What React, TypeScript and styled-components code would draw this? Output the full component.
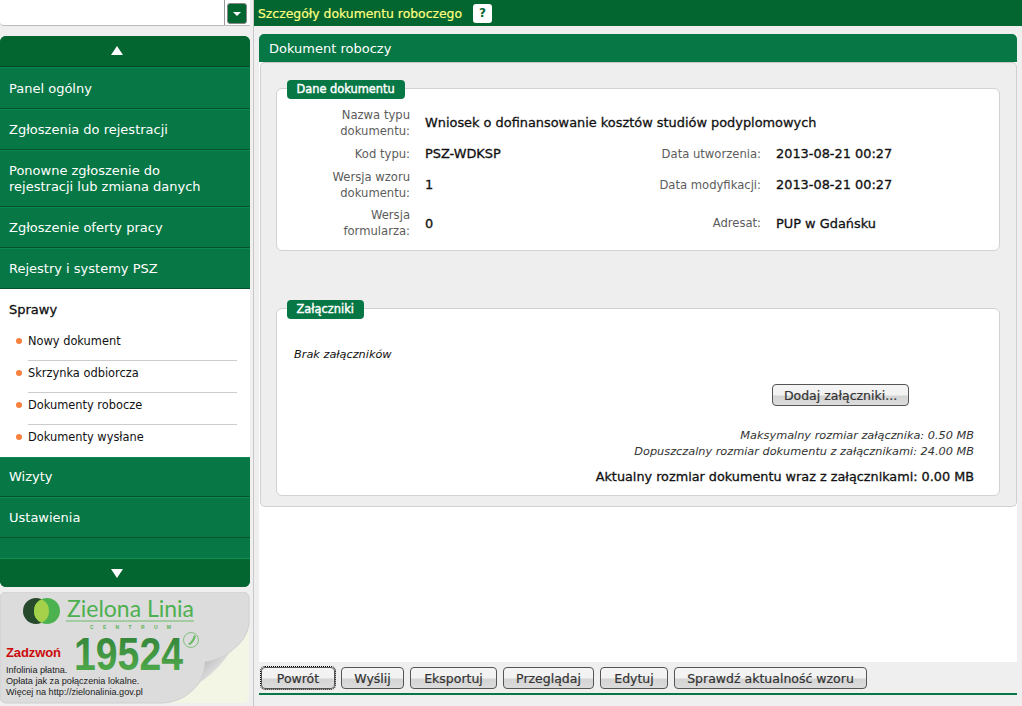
import React from "react";
import styled, { createGlobalStyle } from "styled-components";

const GREEN = "#077745";
const DARK = "#03652f";

const GlobalStyle = createGlobalStyle`
  html, body, #root {
    margin: 0;
    height: 100%;
  }
  body {
    background: #efefef;
    overflow: hidden;
    font-family: "DejaVu Sans", Verdana, sans-serif;
    font-size: 11.4px;
    color: #111;
  }
`;

const Page = styled.div`
  display: flex;
  height: 706px;
`;

const Side = styled.aside`
  width: 250px;
  flex: none;
  display: flex;
  flex-direction: column;
`;

const SelectRow = styled.div`
  height: 25px;
  display: flex;
  background: #fff;
  border-bottom: 1px solid #bbb;
  border-radius: 0 0 0 4px;
`;

const SelectBox = styled.div`
  width: 225px;
  flex: none;
  box-sizing: border-box;
  border-right: 1px solid #999;
`;

const SelectButton = styled.div`
  box-sizing: border-box;
  width: 20px;
  height: 21px;
  margin: 3px 0 0 2px;
  background: ${DARK};
  border: 1px solid #888;
  border-radius: 3px;
  display: flex;
  align-items: center;
  justify-content: center;
  &::after {
    content: "";
    border: 4px solid transparent;
    border-top: 4px solid #fff;
    border-bottom: 0;
  }
`;

const Menu = styled.nav`
  margin-top: 10px;
  height: 551px;
  display: flex;
  flex-direction: column;
  background: ${GREEN};
  border-radius: 6px;
  overflow: hidden;
`;

const Scroller = styled.div<{ $down?: boolean; $h: number }>`
  box-sizing: border-box;
  height: ${p => p.$h}px;
  flex: none;
  padding: ${p => (p.$down ? "0 16px 0 0" : "0 16px 1px 0")};
  background: ${DARK};
  display: flex;
  align-items: center;
  justify-content: center;
  border-bottom: ${p => (p.$down ? "0" : "1px solid #024a24")};
  border-top: ${p => (p.$down ? "1px solid #109052" : "0")};
  &::after {
    content: "";
    border-left: 6px solid transparent;
    border-right: 6px solid transparent;
    ${p =>
      p.$down
        ? "border-top: 9px solid #fff;"
        : "border-bottom: 9px solid #fff;"}
  }
`;

const MenuItem = styled.a<{ $h: number; $first?: boolean }>`
  box-sizing: border-box;
  height: ${p => p.$h}px;
  flex: none;
  display: flex;
  align-items: center;
  padding: ${p => (p.$first ? "2px 9px 0" : "0 9px")};
  color: #fff;
  font-size: 13px;
  line-height: 16px;
  background: ${GREEN};
  border-top: 1px solid #0a8a50;
  border-bottom: 1px solid #04522a;
`;

const Filler = styled.div`
  flex: 1;
`;

const SubMenu = styled.div`
  box-sizing: border-box;
  height: 168px;
  flex: none;
  background: #fff;
  padding: 0 13px 0 9px;
`;

const SubTitle = styled.div`
  height: 40px;
  display: flex;
  align-items: center;
  font-size: 13px;
  color: #111;
  -webkit-text-stroke: 0.3px #111;
  box-sizing: border-box;
`;

const SubList = styled.ul`
  list-style: none;
  margin: 0;
  padding: 0 0 0 19px;
`;

const SubItem = styled.li`
  position: relative;
  height: 32px;
  line-height: 24px;
  box-sizing: border-box;
  border-bottom: 1px solid #ccc;
  &:last-child {
    border-bottom: 0;
  }
  &::before {
    content: "";
    position: absolute;
    left: -12px;
    top: 9px;
    width: 6px;
    height: 6px;
    border-radius: 50%;
    background: #f5813c;
  }
`;

const Banner = styled.div`
  margin-top: 5px;
  height: 112px;
  svg {
    display: block;
  }
`;

const Main = styled.main`
  flex: 1;
  margin-left: 3px;
  border-left: 1px solid #c8c8c8;
  display: flex;
  flex-direction: column;
`;

const TopBar = styled.header`
  height: 26px;
  flex: none;
  box-sizing: border-box;
  background: ${DARK};
  display: flex;
  align-items: center;
  gap: 11px;
  padding-left: 4px;
  color: #ffff80;
  font-size: 12.4px;
  -webkit-text-stroke: 0.2px #ffff80;
`;

const HelpBadge = styled.span`
  width: 19px;
  height: 19px;
  background: #fff;
  border-radius: 3px;
  color: ${DARK};
  font-weight: bold;
  font-size: 12px;
  display: flex;
  align-items: center;
  justify-content: center;
  -webkit-text-stroke: 0;
`;

const Work = styled.div`
  flex: 1;
  margin: 8px 5px 0 5px;
  display: flex;
  flex-direction: column;
  background: #fff;
`;

const PanelHeader = styled.div`
  height: 28px;
  flex: none;
  background: ${GREEN};
  border-radius: 5px 5px 0 0;
  color: #fff;
  font-size: 13px;
  display: flex;
  align-items: center;
  padding-left: 10px;
  box-sizing: border-box;
`;

const PanelBody = styled.div`
  box-sizing: border-box;
  height: 445px;
  flex: none;
  margin-left: 1px;
  background: #eeeeee;
  border: 1px solid #d0d0d0;
  border-top: 1px solid #c8c8c8;
  border-radius: 5px;
  padding: 25px 16px 0 15px;
`;

const Fieldset = styled.section<{ $h: number }>`
  position: relative;
  box-sizing: border-box;
  height: ${p => p.$h}px;
  background: #fff;
  border: 1px solid #d2d2d2;
  border-radius: 6px;
  & + & {
    margin-top: 57px;
  }
`;

const Legend = styled.div`
  position: absolute;
  left: 10px;
  top: -9px;
  height: 19px;
  padding: 0 10px 0 9.5px;
  background: ${GREEN};
  border-radius: 4px;
  color: #fff;
  font-size: 11.4px;
  -webkit-text-stroke: 0.4px #fff;
  line-height: 19px;
`;

const FormGrid = styled.div`
  display: grid;
  grid-template-columns: 133px 218px 133px 1fr;
  grid-template-rows: 31px 31px 31px 46px;
  padding-top: 18px;
`;

const Label = styled.div`
  text-align: right;
  color: #5c5c5c;
  font-size: 11.6px;
  line-height: 16px;
  align-self: center;
`;

const Value = styled.div<{ $wide?: boolean }>`
  align-self: center;
  padding-left: 15px;
  font-size: 12.9px;
  color: #111;
  -webkit-text-stroke: 0.3px #111;
  ${p => (p.$wide ? "grid-column: 2 / 5;" : "")}
`;

const Empty = styled.div`
  font-style: italic;
  padding: 39px 0 0 17px;
  font-size: 11.3px;
  line-height: 14px;
`;

const AddRow = styled.div`
  display: flex;
  justify-content: flex-end;
  padding: 22px 90px 0 0;
`;

const Limits = styled.div`
  margin-top: 22px;
  padding-right: 25px;
  text-align: right;
  font-style: italic;
  font-size: 11.3px;
  color: #333;
  line-height: 16px;
`;

const Total = styled.div`
  margin-top: 9px;
  padding-right: 25px;
  text-align: right;
  font-size: 12.8px;
  -webkit-text-stroke: 0.3px #111;
  color: #111;
`;

const Grow = styled.div`
  flex: 1;
`;

const Footer = styled.footer`
  height: 33px;
  flex: none;
  box-sizing: border-box;
  background: #efefef;
  border-bottom: 2px solid ${GREEN};
  padding: 5px 0 0 2px;
  display: flex;
  align-items: flex-start;
  gap: 6px;
`;

const Button = styled.button<{ $focus?: boolean; $w: number }>`
  box-sizing: border-box;
  width: ${p => p.$w}px;
  height: 22px;
  padding: 0;
  border: 1px solid #555;
  border-radius: 4px;
  background: linear-gradient(#f4f4f4 0, #f2f2f2 50%, #d4d4d4 55%, #dcdcdc 100%);
  color: #333;
  font-family: "DejaVu Sans", Verdana, sans-serif;
  font-size: 12.5px;
  -webkit-text-stroke: 0.2px #333;
  ${p => (p.$focus ? "outline: 1px dotted #000; outline-offset: 0;" : "")}
`;

const PageBottom = styled.div`
  height: 11px;
  flex: none;
  margin: 0 -5px;
  background: #efefef;
`;

const BannerArt = () => (
  <svg width="250" height="112" viewBox="0 0 250 112">
    <defs>
      <linearGradient id="curl" x1="0" y1="0" x2="1" y2="1">
        <stop offset="0" stopColor="#a8a8a8" />
        <stop offset="0.55" stopColor="#dcdcdc" />
        <stop offset="1" stopColor="#f8f8f8" />
      </linearGradient>
      <linearGradient id="digits" x1="0" y1="0" x2="0" y2="1">
        <stop offset="0" stopColor="#2f7d37" />
        <stop offset="1" stopColor="#55b14e" />
      </linearGradient>
    </defs>
    <rect x="0" y="0" width="249" height="111" rx="6" fill="#f3f6e4" />
    <path
      d="M6 0H243a6 6 0 0 1 6 6V32C247 45 240 52 230 60C218 68 210 69 205 70C205 78 202 85 199 91C190 103 178 111 160 111H6a6 6 0 0 1-6-6V6a6 6 0 0 1 6-6Z"
      fill="#dcdcdc"
      stroke="#cfcfcf"
    />
    <path d="M230 60C218 68 210 69 205 70C205 78 202 85 199 91C212 83 222 72 230 60Z" fill="url(#curl)" />
    <circle cx="36" cy="19" r="13" fill="#274a2d" />
    <circle cx="47" cy="19" r="13" fill="#4cb250" />
    <path d="M41.5 7.2a13 13 0 0 1 0 23.6a13 13 0 0 1 0-23.6Z" fill="#a5d04a" />
    <text x="67" y="25" fontFamily="Lato, 'Noto Sans', sans-serif" fontSize="24" fill="#4cb050" textLength="127" lengthAdjust="spacingAndGlyphs">
      Zielona Linia
    </text>
    <rect x="66" y="28.5" width="128" height="1" fill="#6dbb68" />
    <text x="90" y="37" fontFamily="'Liberation Sans', sans-serif" fontSize="5" fontWeight="bold" fill="#5bb257" textLength="81">
      CENTRUM
    </text>
    <text x="74" y="78" fontFamily="'Liberation Sans', sans-serif" fontSize="47" fontWeight="bold" fill="url(#digits)" textLength="109" lengthAdjust="spacingAndGlyphs">
      19524
    </text>
    <circle cx="191" cy="48" r="7.5" fill="none" stroke="#6cba68" strokeWidth="0.8" />
    <path d="M194 43c-1 4-3 7-6 9l2 1c3-2 5-5 6-9Z" fill="#6cba68" />
    <text x="6" y="65" fontFamily="'Liberation Sans', sans-serif" fontSize="13" fontWeight="bold" fill="#cc0a0a" textLength="55">
      Zadzwoń
    </text>
    <g fontFamily="'Liberation Sans', sans-serif" fontSize="9.15" fill="#222">
      <text x="6" y="81">Infolinia płatna.</text>
      <text x="6" y="92">Opłata jak za połączenia lokalne.</text>
      <text x="6" y="103">Więcej na http://zielonalinia.gov.pl</text>
    </g>
  </svg>
);

const App = () => (
  <Page>
    <GlobalStyle />
    <Side>
      <SelectRow>
        <SelectBox />
        <SelectButton />
      </SelectRow>
      <Menu>
        <Scroller $h={31} />
        <MenuItem $h={42} $first>Panel ogólny</MenuItem>
        <MenuItem $h={41}>Zgłoszenia do rejestracji</MenuItem>
        <MenuItem $h={57}>
          Ponowne zgłoszenie do
          <br />
          rejestracji lub zmiana danych
        </MenuItem>
        <MenuItem $h={41}>Zgłoszenie oferty pracy</MenuItem>
        <MenuItem $h={41}>Rejestry i systemy PSZ</MenuItem>
        <SubMenu>
          <SubTitle>Sprawy</SubTitle>
          <SubList>
            <SubItem>Nowy dokument</SubItem>
            <SubItem>Skrzynka odbiorcza</SubItem>
            <SubItem>Dokumenty robocze</SubItem>
            <SubItem>Dokumenty wysłane</SubItem>
          </SubList>
        </SubMenu>
        <MenuItem $h={40}>Wizyty</MenuItem>
        <MenuItem $h={41}>Ustawienia</MenuItem>
        <Filler />
        <Scroller $h={29} $down />
      </Menu>
      <Banner>
        <BannerArt />
      </Banner>
    </Side>
    <Main>
      <TopBar>
        Szczegóły dokumentu roboczego
        <HelpBadge>?</HelpBadge>
      </TopBar>
      <Work>
        <PanelHeader>Dokument roboczy</PanelHeader>
        <PanelBody>
          <Fieldset $h={163}>
            <Legend>Dane dokumentu</Legend>
            <FormGrid>
              <Label>
                Nazwa typu
                <br />
                dokumentu:
              </Label>
              <Value $wide>Wniosek o dofinansowanie kosztów studiów podyplomowych</Value>
              <Label>Kod typu:</Label>
              <Value>PSZ-WDKSP</Value>
              <Label>Data utworzenia:</Label>
              <Value>2013-08-21 00:27</Value>
              <Label>
                Wersja wzoru
                <br />
                dokumentu:
              </Label>
              <Value>1</Value>
              <Label>Data modyfikacji:</Label>
              <Value>2013-08-21 00:27</Value>
              <Label>
                Wersja
                <br />
                formularza:
              </Label>
              <Value>0</Value>
              <Label>Adresat:</Label>
              <Value>PUP w Gdańsku</Value>
            </FormGrid>
          </Fieldset>
          <Fieldset $h={188}>
            <Legend>Załączniki</Legend>
            <Empty>Brak załączników</Empty>
            <AddRow>
              <Button $w={137}>Dodaj załączniki...</Button>
            </AddRow>
            <Limits>
              Maksymalny rozmiar załącznika: 0.50 MB
              <br />
              Dopuszczalny rozmiar dokumentu z załącznikami: 24.00 MB
            </Limits>
            <Total>Aktualny rozmiar dokumentu wraz z załącznikami: 0.00 MB</Total>
          </Fieldset>
        </PanelBody>
        <Grow />
        <Footer>
          <Button $focus $w={74}>Powrót</Button>
          <Button $w={63}>Wyślij</Button>
          <Button $w={87}>Eksportuj</Button>
          <Button $w={91}>Przeglądaj</Button>
          <Button $w={68}>Edytuj</Button>
          <Button $w={193}>Sprawdź aktualność wzoru</Button>
        </Footer>
        <PageBottom />
      </Work>
    </Main>
  </Page>
);

export default App;
